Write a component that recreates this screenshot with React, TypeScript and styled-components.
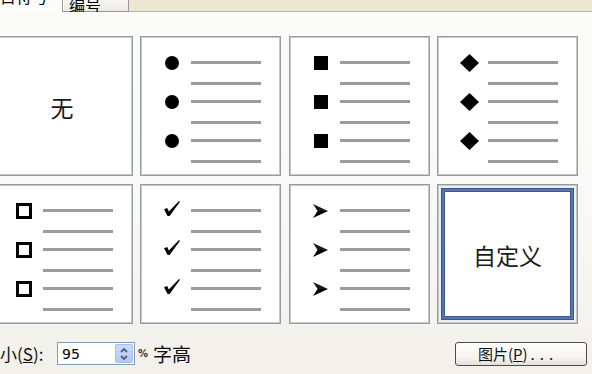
import React from "react";
import styled, { createGlobalStyle, css } from "styled-components";

const Global = createGlobalStyle`
  html, body {
    margin: 0;
    padding: 0;
    width: 592px;
    height: 374px;
    overflow: hidden;
    background: #f3f1eb;
  }
  body {
    font-family: "Noto Sans CJK SC", "Liberation Sans", sans-serif;
    color: #000;
  }
`;

const Dialog = styled.div`
  width: 592px;
  height: 374px;
  overflow: hidden;
  display: flex;
  flex-direction: column;
`;

const TabStrip = styled.div`
  height: 12px;
  flex: 0 0 12px;
  display: flex;
  overflow: hidden;
  margin-left: -22px;
`;

const Tab = styled.div<{ $active?: boolean }>`
  height: 12px;
  box-sizing: border-box;
  display: flex;
  align-items: flex-end;
  ${(p) =>
    p.$active
      ? css`
          width: 84px;
          padding-left: 6px;
          background: #fcfcfb;
        `
      : css`
          width: 67px;
          padding-left: 6px;
          background: linear-gradient(#f7f6f2, #ebe9e1);
          border: 1px solid #95999a;
          border-top: none;
          box-shadow: inset 1px 0 0 #ffffff;
        `}
`;

const TabLabel = styled.span<{ $active?: boolean }>`
  font-size: 16px;
  line-height: 16px;
  white-space: nowrap;
  margin-bottom: ${(p) => (p.$active ? "8px" : "-2px")};
`;

const TabFiller = styled.div`
  flex: 1;
  background: #ede6d3;
  border-bottom: 1px solid #b4b5ad;
`;

const Pane = styled.div`
  flex: 1;
  padding-top: 24px;
  background: linear-gradient(#fbfbfa 0%, #f8f8f6 55%, #f2f0ea 100%);
`;

const Gallery = styled.div`
  display: grid;
  grid-template-columns: repeat(4, 141px);
  grid-auto-rows: 140px;
  column-gap: 7.5px;
  row-gap: 8px;
  margin-left: -8.5px;
`;

const Card = styled.div<{ $selected?: boolean }>`
  box-sizing: border-box;
  background: #ffffff;
  border: 1px solid #979b9b;
  box-shadow: ${(p) =>
    p.$selected
      ? "inset 0 0 0 1px #c3c7c7, inset 0 0 0 3px #eef0f3, inset 0 0 0 4px #39568a, inset 0 0 0 6px #5875a8, inset 0 0 0 7px #3c5a8f"
      : "inset 0 0 0 1px #c6caca"};
`;

const TextCard = styled(Card)`
  display: flex;
  align-items: center;
  justify-content: center;
`;

const CardText = styled.span`
  font-size: 23px;
  line-height: 1;
  color: #1a1a1a;
  margin-top: 2px;
`;

const ListCard = styled(Card)`
  display: flex;
  flex-direction: column;
  gap: 15px;
  padding: 24px 0 0 21px;
`;

const ListRow = styled.div`
  display: flex;
  align-items: flex-start;
  gap: 9px;
`;

const MarkerSlot = styled.div`
  width: 20px;
  height: 3px;
  display: flex;
  align-items: center;
  justify-content: center;
  overflow: visible;
`;

const Lines = styled.div`
  display: flex;
  flex-direction: column;
  gap: 18px;
`;

const Rule = styled.div`
  width: 70px;
  height: 3px;
  background: #9b9b9b;
`;

const Dot = styled.div`
  flex: 0 0 14px;
  width: 14px;
  height: 14px;
  border-radius: 50%;
  background: #000;
`;

const Square = styled.div`
  flex: 0 0 14px;
  width: 14px;
  height: 14px;
  background: #000;
`;

const HollowSquare = styled.div`
  flex: 0 0 16px;
  width: 16px;
  height: 16px;
  box-sizing: border-box;
  border: 3px solid #000;
  background: #fff;
`;

const Glyph = styled.svg`
  flex: 0 0 auto;
  display: block;
`;

const Diamond = () => (
  <Glyph width="19" height="18" viewBox="0 0 19 18">
    <polygon points="9.5,0 19,9 9.5,18 0,9" fill="#000" />
  </Glyph>
);

const Check = () => (
  <Glyph width="16" height="15" viewBox="0 0 16 15" style={{ marginTop: -4 }}>
    <path d="M0 8.2 L3.2 7 L4.8 10.4 L15 0 L16 0.8 L5.6 15 L3.6 15 Z" fill="#000" />
  </Glyph>
);

const Arrowhead = () => (
  <Glyph width="15" height="14" viewBox="0 0 15 14">
    <path d="M0 0 L15 7 L4.5 7 Z" fill="#1a1a1a" />
    <path d="M4.5 7 L15 7 L0 14 Z" fill="#000" />
  </Glyph>
);

type MarkerKind = "dot" | "square" | "diamond" | "hollow" | "check" | "arrow";

const Marker = ({ kind }: { kind: MarkerKind }) => {
  switch (kind) {
    case "dot":
      return <Dot />;
    case "square":
      return <Square />;
    case "diamond":
      return <Diamond />;
    case "hollow":
      return <HollowSquare />;
    case "check":
      return <Check />;
    default:
      return <Arrowhead />;
  }
};

const BulletCard = ({ kind }: { kind: MarkerKind }) => (
  <ListCard>
    {[0, 1, 2].map((i) => (
      <ListRow key={i}>
        <MarkerSlot>
          <Marker kind={kind} />
        </MarkerSlot>
        <Lines>
          <Rule />
          <Rule />
        </Lines>
      </ListRow>
    ))}
  </ListCard>
);

const Footer = styled.div`
  margin-top: 17px;
  margin-left: -17px;
  padding-right: 5px;
  height: 25px;
  display: flex;
  align-items: center;
`;

const SizeLabel = styled.span`
  flex: 0 0 74px;
  font-size: 17px;
  line-height: 1;
  white-space: nowrap;
  color: #111;
`;

const Mnemonic = styled.u`
  text-underline-offset: 1px;
`;

const SpinBox = styled.div`
  width: 78px;
  height: 23px;
  box-sizing: border-box;
  border: 1px solid #7f9db9;
  background: #fff;
  display: flex;
  align-items: center;
  padding: 1px 1px 1px 4px;
`;

const SpinValue = styled.span`
  flex: 1;
  font-family: "DejaVu Sans", "Liberation Sans", sans-serif;
  font-size: 14px;
  line-height: 1;
`;

const SpinButtons = styled.div`
  width: 18px;
  height: 19px;
  box-sizing: border-box;
  border: 1px solid #a9bde9;
  border-radius: 2px;
  background: linear-gradient(#cddafa, #b3c6f2);
  display: flex;
  flex-direction: column;
  align-items: center;
  justify-content: center;
  gap: 2px;
`;

const Chevron = ({ down }: { down?: boolean }) => (
  <svg width="8" height="5" viewBox="0 0 8 5" style={{ display: "block" }}>
    <path
      d={down ? "M1 1 L4 4 L7 1" : "M1 4 L4 1 L7 4"}
      fill="none"
      stroke="#4d6185"
      strokeWidth="1.8"
    />
  </svg>
);

const Percent = styled.span`
  font-family: "DejaVu Sans", sans-serif;
  font-size: 10px;
  font-weight: bold;
  margin: 0 5px 0 3px;
  color: #333;
`;

const Unit = styled.span`
  font-size: 19px;
  line-height: 1;
  color: #111;
`;

const PushButton = styled.button`
  margin-left: auto;
  width: 132px;
  height: 24px;
  box-sizing: border-box;
  border: 1px solid #4a4a4a;
  border-radius: 3px;
  background: linear-gradient(#ffffff, #f3f2ee 70%, #e2e0d8);
  font-family: "Noto Sans CJK SC", sans-serif;
  font-size: 15px;
  line-height: 1;
  color: #111;
  padding: 0 6px 0 0;
  display: flex;
  align-items: center;
  justify-content: center;
`;

const Dots = styled.span`
  letter-spacing: 5px;
  margin-left: 3px;
`;

export default function App() {
  return (
    <>
      <Global />
      <Dialog>
        <TabStrip>
          <Tab $active>
            <TabLabel $active>项目符号</TabLabel>
          </Tab>
          <Tab>
            <TabLabel>编号</TabLabel>
          </Tab>
          <TabFiller />
        </TabStrip>
        <Pane>
          <Gallery>
            <TextCard>
              <CardText>无</CardText>
            </TextCard>
            <BulletCard kind="dot" />
            <BulletCard kind="square" />
            <BulletCard kind="diamond" />
            <BulletCard kind="hollow" />
            <BulletCard kind="check" />
            <BulletCard kind="arrow" />
            <TextCard $selected>
              <CardText>自定义</CardText>
            </TextCard>
          </Gallery>
          <Footer>
            <SizeLabel>
              大小(<Mnemonic>S</Mnemonic>):
            </SizeLabel>
            <SpinBox>
              <SpinValue>95</SpinValue>
              <SpinButtons>
                <Chevron />
                <Chevron down />
              </SpinButtons>
            </SpinBox>
            <Percent>%</Percent>
            <Unit>字高</Unit>
            <PushButton>
              图片(<Mnemonic>P</Mnemonic>)<Dots>...</Dots>
            </PushButton>
          </Footer>
        </Pane>
      </Dialog>
    </>
  );
}
